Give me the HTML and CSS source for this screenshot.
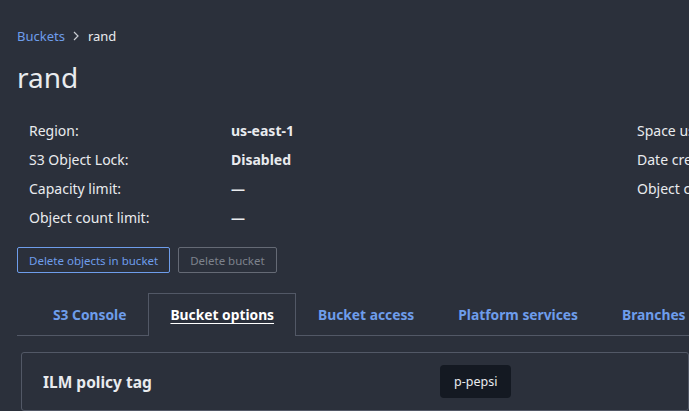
FILE: index.html
```html
<!DOCTYPE html>
<html lang="en">
<head>
  <meta charset="UTF-8">
  <meta name="viewport" content="width=device-width, initial-scale=1.0">
  <title>rand - Bucket</title>
  <link rel="stylesheet" href="styles.css">
</head>
<body>
  <nav class="breadcrumb">
    <a href="#">Buckets</a>
    <svg class="chevron" width="6" height="10" viewBox="0 0 6 10"><path d="M1 1l4 4-4 4" fill="none" stroke="#c9ccd2" stroke-width="1.2"/></svg>
    <span>rand</span>
  </nav>

  <h1 class="title">rand</h1>

  <div class="details">
    <dl class="detail-list">
      <dt>Region:</dt><dd>us-east-1</dd>
      <dt>S3 Object Lock:</dt><dd>Disabled</dd>
      <dt>Capacity limit:</dt><dd>&mdash;</dd>
      <dt>Object count limit:</dt><dd>&mdash;</dd>
    </dl>
    <dl class="detail-list">
      <dt>Space used:</dt><dd>0 bytes</dd>
      <dt>Date created:</dt><dd>2023-05-11</dd>
      <dt>Object count:</dt><dd>0</dd>
    </dl>
  </div>

  <div class="actions">
    <button class="btn btn-primary">Delete objects in bucket</button>
    <button class="btn" disabled>Delete bucket</button>
  </div>

  <!-- Tabs -->
  <ul class="tabs">
    <li class="tab">S3 Console</li>
    <li class="tab active">Bucket options</li>
    <li class="tab">Bucket access</li>
    <li class="tab">Platform services</li>
    <li class="tab">Branches</li>
  </ul>

  <section class="panel">
    <div class="panel-row">
      <h2 class="panel-label">ILM policy tag</h2>
      <span class="tag">p-pepsi</span>
    </div>
  </section>
</body>
</html>
```

FILE: styles.css
```css
html, body {
  overflow: hidden;
}
body {
  font-family: "Noto Sans", "Open Sans", sans-serif;
  background-color: #2b303b;
  color: #e9ebee;
  margin: 0;
  padding: 27px 0 0 17px;
  white-space: nowrap;
}

.breadcrumb {
  display: flex;
  align-items: center;
  font-size: 13px;
  line-height: 18px;
}
.breadcrumb a {
  color: #6e9deb;
  text-decoration: none;
}
.chevron {
  margin: 0 9px 1px 8px;
}

.title {
  font-size: 28px;
  font-weight: 400;
  line-height: 36px;
  margin: 14px 0 0;
}

.details {
  display: grid;
  grid-template-columns: 608px 400px;
  margin: 26px 0 0 12px;
}
.detail-list {
  display: grid;
  grid-template-columns: 202px 180px;
  grid-auto-rows: 20px;
  align-content: start;
  row-gap: 9px;
  margin: 0;
  font-size: 14px;
  line-height: 20px;
}
.detail-list dt {
  margin: 0;
}
.detail-list dd {
  margin: 0;
  font-weight: 700;
}

.actions {
  display: flex;
  gap: 8px;
  margin-top: 19px;
}
.btn {
  font-family: inherit;
  font-size: 11.5px;
  height: 26px;
  padding: 0 11px;
  background: transparent;
  border: 1px solid #656a75;
  border-radius: 2px;
  color: #7d828c;
}
.btn-primary {
  border-color: #6e9deb;
  color: #6e9deb;
}

.tabs {
  display: flex;
  list-style: none;
  margin: 20px 0 0;
  padding: 0 0 0 14px;
  border-bottom: 1px solid #525866;
}
.tab {
  font-size: 13.8px;
  font-weight: 700;
  line-height: 20px;
  color: #6e9deb;
  padding: 11px 21px 10px;
  margin-bottom: -1px;
  border: 1px solid transparent;
  border-bottom: none;
}
.tab.active {
  color: #ffffff;
  text-decoration: underline;
  text-underline-offset: 3px;
  border-color: #525866;
  background-color: #2b303b;
  padding-bottom: 11px;
}

.panel {
  margin: 16px 0 0 4px;
  border: 1px solid #525866;
  border-radius: 3px;
  padding: 12px 21px;
}
.panel-row {
  display: flex;
  align-items: center;
}
.panel-label {
  width: 397px;
  margin: 0;
  font-size: 15.5px;
  font-weight: 700;
}
.tag {
  background-color: #141922;
  border-radius: 4px;
  padding: 0 14px;
  font-size: 12.5px;
  line-height: 33px;
}
```
